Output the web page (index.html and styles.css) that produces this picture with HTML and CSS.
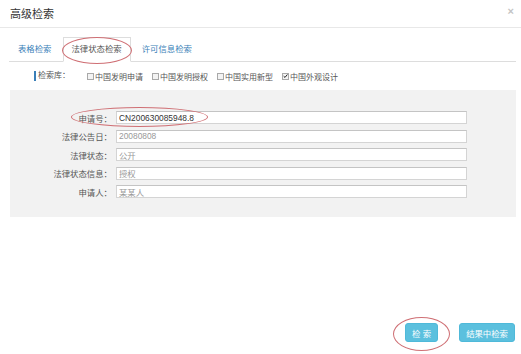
FILE: index.html
```html
<!doctype html>
<html lang="zh">
	<head>
		<meta charset="utf-8">
		<title>高级检索</title>
		<link rel="stylesheet" href="styles.css">
	</head>
	<body>
		<div class="modal">
			<div class="modal-header">
				<h4 class="modal-title">高级检索</h4>
				<span class="close">×</span>
			</div>

			<div class="modal-body">
				<ul class="tabs">
					<li>表格检索</li>
					<li class="active">法律状态检索</li>
					<li>许可信息检索</li>
				</ul>

				<div class="db-row">
					<span class="db-label">检索库：</span>
					<label class="db-item"><span class="cb"></span>中国发明申请</label>
					<label class="db-item"><span class="cb"></span>中国发明授权</label>
					<label class="db-item"><span class="cb"></span>中国实用新型</label>
					<label class="db-item"><span class="cb checked"><svg viewBox="0 0 8 8" width="6" height="6"><path d="M1 4.2 L3.2 6.3 L7 1.6" fill="none" stroke="#222" stroke-width="1.6"/></svg></span>中国外观设计</label>
				</div>

				<div class="panel">
					<div class="form-grid">
						<label for="appNo">申请号：</label>
						<input type="text" id="appNo" value="CN200630085948.8">

						<label for="pubDate">法律公告日：</label>
						<input type="text" id="pubDate" class="muted" value="20080808">

						<label for="status">法律状态：</label>
						<input type="text" id="status" class="muted" value="公开">

						<label for="statusInfo">法律状态信息：</label>
						<input type="text" id="statusInfo" class="muted" value="授权">

						<label for="applicant">申请人：</label>
						<input type="text" id="applicant" class="muted" value="某某人">
					</div>
				</div>

				<div class="actions">
					<button type="button" class="btn">检 索</button>
					<button type="button" class="btn">结果中检索</button>
				</div>
			</div>

			<!-- annotation marks -->
			<span class="mark mark-tab"></span>
			<span class="mark mark-field"></span>
			<span class="mark mark-btn"></span>
		</div>
	</body>
</html>
```

FILE: styles.css
```css
body {
	margin: 0;
	background: #fff;
	font-family: "Liberation Sans", "Noto Sans CJK SC", sans-serif;
	font-size: 8.4px;
	color: #555;
}

.modal {
	position: relative;
	width: 521px;
	height: 354px;
	overflow: hidden;
}

.modal-header {
	display: flex;
	align-items: center;
	justify-content: space-between;
	box-sizing: border-box;
	height: 28px;
	padding: 0 7px 2px 10px;
	border-bottom: 1px solid #e8e8e8;
}

.modal-title {
	margin: 0;
	font-size: 11px;
	font-weight: normal;
	color: #333;
}

.close {
	font-size: 11px;
	font-weight: bold;
	color: #c4c4c4;
	margin-top: -3px;
}

.modal-body {
	padding: 0 5px 0 10px;
}

.tabs {
	display: flex;
	list-style: none;
	margin: 9px 0 0 -1px;
	padding: 0;
	border-bottom: 1px solid #ddd;
}

.tabs li {
	padding: 0 8px;
	line-height: 23px;
	border: 1px solid transparent;
	margin-bottom: -1px;
	margin-right: 2px;
	color: #3a7fb8;
}

.tabs li.active {
	border-color: #ddd #ddd transparent;
	background: #fff;
	color: #555;
}

.db-row {
	display: flex;
	align-items: center;
	height: 28px;
	padding-left: 24px;
	font-size: 8px;
}

.db-label {
	border-left: 2px solid #3a7fb8;
	padding-left: 2px;
	line-height: 10px;
	margin-right: 17px;
}

.db-item {
	display: flex;
	align-items: center;
	margin-right: 9px;
}

.cb {
	display: inline-flex;
	align-items: center;
	justify-content: center;
	box-sizing: border-box;
	width: 7px;
	height: 7px;
	border: 1px solid #a9a9a9;
	background: #f3f3f3;
	margin-right: 1px;
}

.panel {
	background: #f2f2f2;
	padding: 21px 0 19px;
}

.form-grid {
	display: grid;
	grid-template-columns: 102px 351px;
	column-gap: 4px;
	row-gap: 5.5px;
	align-items: center;
}

.form-grid label {
	text-align: right;
	color: #555;
}

.form-grid input {
	box-sizing: border-box;
	height: 13px;
	width: 100%;
	margin: 0;
	padding: 0 2px;
	border: 1px solid #d4d4d4;
	border-top-color: #c4c4c4;
	background: #fff;
	font-family: "Liberation Sans", "Noto Sans CJK SC", sans-serif;
	font-size: 8.4px;
	color: #333;
}

.form-grid input.muted {
	color: #999;
}

.actions {
	display: flex;
	justify-content: flex-end;
	gap: 21px;
	margin-top: 106px;
	padding-right: 1px;
}

.btn {
	height: 19px;
	padding: 0 6px;
	border: 1px solid #4fb9d9;
	border-radius: 3px;
	background: #5bc0de;
	color: #fff;
	font-family: "Liberation Sans", "Noto Sans CJK SC", sans-serif;
	font-size: 8.4px;
}

.mark {
	position: absolute;
	border: 1px solid #cf6f74;
	border-radius: 50%;
}

.mark-tab {
	left: 62px;
	top: 37px;
	width: 68px;
	height: 25px;
}

.mark-field {
	left: 71px;
	top: 107px;
	width: 135px;
	height: 18px;
}

.mark-btn {
	left: 393px;
	top: 317px;
	width: 55px;
	height: 32px;
}
```
